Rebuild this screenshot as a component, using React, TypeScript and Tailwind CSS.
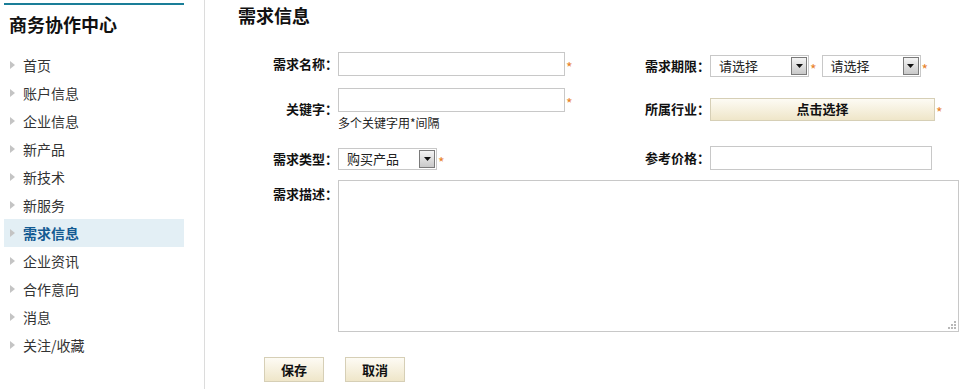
import React from 'react';

const menu = ['首页', '账户信息', '企业信息', '新产品', '新技术', '新服务', '需求信息', '企业资讯', '合作意向', '消息', '关注/收藏'];

const Star = () => <span className="relative top-[3px] ml-[1px] text-[14px] leading-none text-[#e8822a]">*</span>;

const Select = ({ value, width }: { value: string; width: string }) => (
  <div className={`flex h-[22px] ${width} items-center justify-between border border-[#c8c8c8] bg-white pl-[8px] pr-[1px]`}>
    <span className="text-[13px] text-[#222]">{value}</span>
    <span className="flex h-[18px] w-[16px] items-center justify-center border border-[#7a7a7a] bg-gradient-to-b from-[#f4f4f4] to-[#c9c9c9]">
      <svg width="7" height="4" viewBox="0 0 7 4">
        <path d="M0 0h7L3.5 4z" fill="#111" />
      </svg>
    </span>
  </div>
);

const Label = ({ children }: { children: React.ReactNode }) => (
  <div className="w-[100px] shrink-0 text-right text-[13px] font-bold text-[#111]">{children}</div>
);

export default function App() {
  return (
    <div className="flex h-[389px] w-[969px] bg-white font-['Noto_Sans_CJK_SC','Noto_Sans',sans-serif] text-[#333]">
      <aside className="w-[205px] shrink-0 border-r border-[#dcdcdc] pl-[4px] pt-[3px]">
        <div className="w-[180px] border-t-2 border-[#1a7e98]">
          <h1 className="pl-[5px] pt-[6px] text-[18px] font-bold leading-[26px] text-[#111]">商务协作中心</h1>
          <ul className="mt-[14px]">
            {menu.map((m) => {
              const active = m === '需求信息';
              return (
                <li
                  key={m}
                  className={`flex h-[28px] items-center pl-[6px] text-[14px] ${active ? 'bg-[#e3eff5] font-bold text-[#135a92]' : 'text-[#333]'}`}
                >
                  <svg width="5" height="8" viewBox="0 0 5 8" className="mr-[8px]">
                    <path d="M0 0l5 4-5 4z" fill="#c4c4c4" />
                  </svg>
                  {m}
                </li>
              );
            })}
          </ul>
        </div>
      </aside>

      <main className="flex-1 pl-[33px] pr-[10px]">
        <h2 className="pt-[3px] text-[18px] font-bold leading-[24px] text-[#111]">需求信息</h2>

        <div className="mt-[25px] flex h-[24px] items-center">
          <div className="flex w-[372px] items-center">
            <Label>需求名称：</Label>
            <input className="h-[24px] w-[227px] border border-[#c8c8c8] outline-none" />
            <Star />
          </div>
          <div className="flex items-center pt-[3px]">
            <Label>需求期限：</Label>
            <Select value="请选择" width="w-[99px]" />
            <Star />
            <div className="ml-[5px]">
              <Select value="请选择" width="w-[99px]" />
            </div>
            <Star />
          </div>
        </div>

        <div className="mt-[11px] flex h-[44px] items-center">
          <div className="flex w-[372px] items-center">
            <Label>关键字：</Label>
            <div className="flex flex-col">
              <div className="flex items-center">
                <input className="h-[24px] w-[227px] border border-[#c8c8c8] outline-none" />
                <Star />
              </div>
              <span className="mt-[4px] text-[12px] leading-[14px] text-[#222]">多个关键字用*间隔</span>
            </div>
          </div>
          <div className="flex items-center">
            <Label>所属行业：</Label>
            <button className="h-[23px] w-[225px] border border-[#d6cfb6] bg-gradient-to-b from-[#fdfbf4] to-[#efe6c9] text-[13px] font-bold text-[#111]">
              点击选择
            </button>
            <Star />
          </div>
        </div>

        <div className="mt-[14px] flex h-[25px] items-center">
          <div className="flex w-[372px] items-center pt-[3px]">
            <Label>需求类型：</Label>
            <Select value="购买产品" width="w-[99px]" />
            <Star />
          </div>
          <div className="flex items-center">
            <Label>参考价格：</Label>
            <input className="h-[24px] w-[222px] border border-[#c8c8c8] outline-none" />
          </div>
        </div>

        <div className="mt-[10px] flex">
          <div className="pt-[4px]">
            <Label>需求描述：</Label>
          </div>
          <div className="relative h-[152px] flex-1 border border-[#c8c8c8]">
            <svg width="10" height="10" viewBox="0 0 10 10" className="absolute bottom-[1px] right-[1px]">
              <g fill="#b8b8b8">
                <rect x="7" y="1" width="2" height="2" />
                <rect x="4" y="4" width="2" height="2" />
                <rect x="7" y="4" width="2" height="2" />
                <rect x="1" y="7" width="2" height="2" />
                <rect x="4" y="7" width="2" height="2" />
                <rect x="7" y="7" width="2" height="2" />
              </g>
            </svg>
          </div>
        </div>

        <div className="mt-[25px] flex gap-[21px] pl-[26px]">
          <button className="h-[25px] w-[60px] border border-[#d6cfb6] bg-gradient-to-b from-[#fdfbf4] to-[#efe6c9] text-[13px] font-bold text-[#111]">
            保存
          </button>
          <button className="h-[25px] w-[60px] border border-[#d6cfb6] bg-gradient-to-b from-[#fdfbf4] to-[#efe6c9] text-[13px] font-bold text-[#111]">
            取消
          </button>
        </div>
      </main>
    </div>
  );
}
